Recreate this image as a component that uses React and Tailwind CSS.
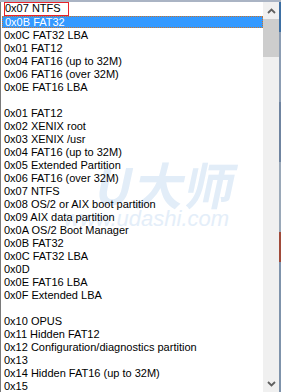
import React from "react";

const items = [
  "0x0C FAT32 LBA",
  "0x01 FAT12",
  "0x04 FAT16 (up to 32M)",
  "0x06 FAT16 (over 32M)",
  "0x0E FAT16 LBA",
  "",
  "0x01 FAT12",
  "0x02 XENIX root",
  "0x03 XENIX /usr",
  "0x04 FAT16 (up to 32M)",
  "0x05 Extended Partition",
  "0x06 FAT16 (over 32M)",
  "0x07 NTFS",
  "0x08 OS/2 or AIX boot partition",
  "0x09 AIX data partition",
  "0x0A OS/2 Boot Manager",
  "0x0B FAT32",
  "0x0C FAT32 LBA",
  "0x0D",
  "0x0E FAT16 LBA",
  "0x0F Extended LBA",
  "",
  "0x10 OPUS",
  "0x11 Hidden FAT12",
  "0x12 Configuration/diagnostics partition",
  "0x13",
  "0x14 Hidden FAT16 (up to 32M)",
  "0x15",
];

const Chevron = ({ up }) => (
  <svg width="9" height="6" viewBox="0 0 9 6" className="block">
    <path
      d={up ? "M1 5 L4.5 1.5 L8 5" : "M1 1 L4.5 4.5 L8 1"}
      fill="none"
      stroke="#606060"
      strokeWidth="1.8"
    />
  </svg>
);

const App = () => {
  return (
    <div className="w-[281px] h-[392px] bg-white overflow-hidden flex flex-col font-['Liberation_Sans',Arial,sans-serif] text-[11px] text-black leading-none">
      {/* top edge */}
      <div className="h-[2px] bg-[#aab4c4] shrink-0" />
      <div className="flex flex-1 min-h-0">
        {/* list */}
        <div className="relative flex-1 border-l border-[#7a7a7a] overflow-hidden">
          {/* watermark */}
          <div className="absolute left-[96px] top-[156px] flex items-end text-[#e2edf8] font-['Noto_Sans_CJK_SC',sans-serif] font-bold text-[50px] leading-none -skew-x-12 pointer-events-none select-none">
            <span className="mr-[2px]">U</span>
            <span>大师</span>
          </div>
          <div className="absolute left-[63px] top-[206px] text-[#e4eef9] italic text-[22px] leading-none pointer-events-none select-none">
            www.udashi.com
          </div>

          <div className="relative flex flex-col">
            <div className="h-[14px] flex items-center pl-[3px]">
              <span className="border border-[#e8232a] h-[14px] w-[65px] flex items-center -mt-[1px]">
                0x07 NTFS
              </span>
            </div>
            <div className="h-[12px] w-[261px] ml-[1px] bg-[#3399ff] text-white flex items-center pl-[2px] border border-dotted border-[#c8742a]">
              0x0B FAT32
            </div>
            <div className="h-[1px]" />
            {items.map((t, i) => (
              <div key={i} className="h-[13px] flex items-center pl-[3px] whitespace-nowrap">
                {t}
              </div>
            ))}
          </div>
        </div>

        {/* scrollbar */}
        <div className="w-[16px] bg-[#f0f0f0] flex flex-col shrink-0">
          <div className="h-[17px] flex items-center justify-center">
            <Chevron up />
          </div>
          <div className="h-[38px] bg-[#cdcdcd]" />
          <div className="flex-1" />
          <div className="h-[17px] flex items-center justify-center">
            <Chevron />
          </div>
        </div>
        {/* window edge behind */}
        <div className="w-[2px] shrink-0 flex flex-col">
          <div className="h-[30px] bg-[#3d6fa3]" />
          <div className="h-[70px] bg-[#8c9db3]" />
          <div className="h-[60px] bg-[#6f84a0]" />
          <div className="h-[70px] bg-[#9aa8b8]" />
          <div className="h-[30px] bg-[#a04a3a]" />
          <div className="flex-1 bg-[#7f93ab]" />
        </div>
      </div>
    </div>
  );
};

export default App;
